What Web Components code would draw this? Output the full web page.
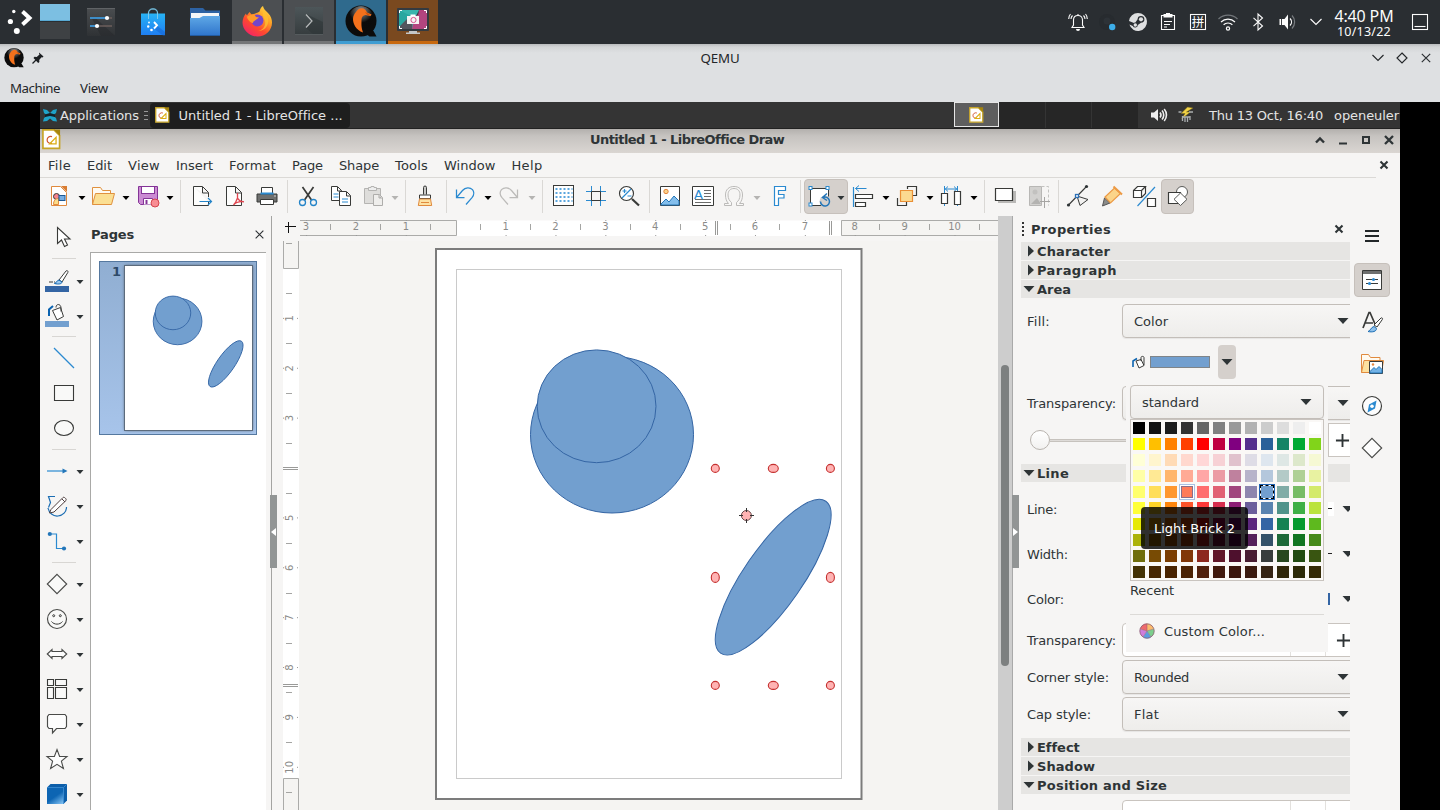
<!DOCTYPE html>
<html lang="en">
<head>
<meta charset="utf-8">
<title>QEMU</title>
<style>
html,body{margin:0;padding:0;width:1440px;height:810px;overflow:hidden;background:#000}
</style>
</head>
<body>
<host-desktop></host-desktop>
<script>
const ICONS = {
/* host panel */
launcher:[32,32,`<g fill="#fff"><circle cx="9.8" cy="5.5" r="1.7"/><circle cx="6.4" cy="15.5" r="2.6"/><circle cx="12.8" cy="25" r="3"/></g><path d="M18.500 5l7 6.500-7 6.500" transform="translate(0,.5)" fill="none" stroke="#fff" stroke-width="4" stroke-linejoin="miter"/>`],
settings:[30,30,`<defs><linearGradient id="a" x1="0" y1="0" x2="0" y2="1"><stop offset="0" stop-color="#4a4d50"/><stop offset="1" stop-color="#2f3235"/></linearGradient></defs><rect x="1" y="1" width="28" height="28" rx="1" fill="url(#a)"/><path d="M1 1.5h28" stroke="#606366"/><path d="M6 11.5l3-1 20 18.5H15z" fill="#25282b" opacity=".5"/><path d="M4 11h18" stroke="#3f97d8" stroke-width="1.8"/><path d="M22 11h4M11 19h15" stroke="#6c5f5c" stroke-width="1.5"/><path d="M4 19h7" stroke="#3f97d8" stroke-width="1.8"/><circle cx="21" cy="11" r="2.1" fill="#fff"/><circle cx="11" cy="19" r="2.1" fill="#fff"/>`],
store:[28,30,`<defs><linearGradient id="a" x1="0" y1="0" x2="0" y2="1"><stop offset="0" stop-color="#27b3f5"/><stop offset="1" stop-color="#1f7ef2"/></linearGradient></defs><path d="M9.500 7V5.500a4.500 3.800 0 0 1 9 0V12M9.500 7v5" fill="none" stroke="#4d8296" stroke-width="1.3"/><path d="M2 6h24v21.500H2z" fill="url(#a)" transform="translate(0,.5)"/><path d="M9.500 12V6a4.500 4 0 0 1 9 0v6" fill="none" stroke="#7fc9ea" stroke-width="1"/><path d="M14 15.500l5 3-3 4 8 6h2V25z" fill="#1667d6" opacity=".6"/><g fill="#fff"><circle cx="10" cy="15.500" r=".9"/><circle cx="9.200" cy="19.500" r="1.200"/><circle cx="12.500" cy="23" r="1.300"/></g><path d="M15 15l3 3.300-3 3.200" fill="none" stroke="#fff" stroke-width="1.900"/>`],
folder:[32,30,`<defs><linearGradient id="a" x1="0" y1="0" x2="0" y2="1"><stop offset="0" stop-color="#5fa8e6"/><stop offset="1" stop-color="#2e74cb"/></linearGradient></defs><path d="M1 1h13l2.500 2.500H31v10H1z" fill="#2d62a3"/><path d="M2 6h28v6H2z" fill="#f4f6f8"/><path d="M1 11h9.500l3.500-2H31v20H1z" fill="url(#a)"/><path d="M1 28h30v1H1z" fill="#235b9f"/>`],
firefox:[32,32,`<defs><linearGradient id="a" x1=".9" y1="0" x2=".2" y2="1"><stop offset="0" stop-color="#ffe14a"/><stop offset=".35" stop-color="#ffa326"/><stop offset=".65" stop-color="#ff4a2e"/><stop offset="1" stop-color="#f0216b"/></linearGradient></defs><path d="M18.500 6.500C19.500 3 20.500 1.800 22 1c.5 3 2.500 4.500 5 7 3 3 4 6.500 4 9.500C31 25.500 24.500 31.500 16.500 31.500S1.500 25 1.500 17.500c0-3.500 1.500-7 3.500-9 .2 1 .6 1.500 1 1.700L8.500 7l2 2.500c2-.7 4.500-.6 8-3z" fill="url(#a)"/><circle cx="16.500" cy="15.500" r="6" fill="#7446c9"/><path d="M10.500 9.500c3-.5 4 1 4.500 2.500l3 .5-4 3c-1 .5-2 1-2 2.500-3-.5-6-4-6-6.500z" fill="#ff9a2a"/><path d="M22 5c4 5 6 7 5 13-1 5-5 8-10 8 5-1 8-5 7-10-.5-3-3-5-2-11z" fill="#ffc230" opacity=".75"/>`],
konsole:[30,30,`<defs><linearGradient id="a" x1="0" y1="0" x2="0" y2="1"><stop offset="0" stop-color="#4d5659"/><stop offset="1" stop-color="#363c3e"/></linearGradient></defs><rect x="1" y="1" width="28" height="28" fill="url(#a)"/><path d="M12 8l6 7-6 7 8 7h9V16z" fill="#2e3436" opacity=".55"/><path d="M12 8.500l6 6.500-6 6.500" fill="none" stroke="#b7babb" stroke-width="1.200"/><path d="M1 28.500h28" stroke="#555b5d"/>`],
qemu:[32,34,`<defs><radialGradient id="a" cx=".5" cy=".2" r=".5"><stop offset="0" stop-color="#c8c8c8"/><stop offset="1" stop-color="#0b0b0b"/></radialGradient></defs><circle cx="16" cy="17" r="15.500" fill="#0c0c0c"/><circle cx="16" cy="14" r="12" fill="url(#a)" opacity=".75"/><path d="M22 26l6.500 1 3 5.500h-7l-4-3z" fill="#0c0c0c"/><path d="M11 8c2-3.500 6-5 9-2.500 1 .9 1.500 2 2 3l4.500 2-1 1.500-5-1c-2.500.5-4 2-4 5 0 4.500-.5 6 1.500 12.500C11 26 8 20 8 15c0-3 1.500-5.500 3-7z" fill="#f4711c"/><path d="M20 8l5 2.300-2.500 1.200z" fill="#cf5208"/>`],
spectacle:[34,28,`<rect x="1" y="1" width="32" height="23" rx="1" fill="#343a40"/><path d="M3 3h13l7 19H3z" fill="#2aa7a0"/><path d="M3 20l13-13v15H3z" fill="#54555e"/><path d="M23 3h8v19H20z" fill="#b4427c"/><path d="M3 3h20l-4 8z" fill="#38b5ad"/><path d="M18 10L31 3v19H16z" fill="#b3457f"/><rect x="11" y="9" width="12" height="8" fill="#f5f3f3"/><rect x="14.500" y="7.500" width="5" height="2" fill="#fff"/><circle cx="17.500" cy="13" r="2.600" fill="none" stroke="#d5528f"/><path d="M3.500 6V3.500H6M28 3.500h2.500V6M3.500 19v2.500H6M28 21.500h2.500V19" fill="none" stroke="#fff"/><path d="M13 24h8v1.500h3V27H10v-1.500h3z" fill="#c4c6c8"/>`],
bell:[22,22,`<g fill="none" stroke="#fcfcfc" stroke-width="1.100"><path d="M5 16.500h12l-1.500-2.500V9c0-3-2-4.500-4.500-4.500S6.500 6 6.500 9v5z"/><path d="M5.500 4.500c-1 1-1.500 2-1.500 3.500M3.500 3C2.300 4.300 1.700 6 1.700 8M16.500 4.500c1 1 1.500 2 1.500 3.500M18.500 3c1.200 1.300 1.800 3 1.800 5M11 3v1.500"/></g><path d="M9 18h4a2 2 0 0 1-4 0z" fill="#fcfcfc"/>`],
dimapp:[22,22,`<circle cx="10" cy="11" r="8" fill="#272b2f"/><circle cx="10" cy="10" r="3.500" fill="#2d3237"/><circle cx="15.200" cy="16" r="3.200" fill="#3daee9"/>`],
steam:[22,22,`<path d="M11 2a9 9 0 1 1-8.600 11.600l3.400 1.400a2.600 2.600 0 0 0 5-1l3.200-2.300a3.400 3.400 0 1 0-3.400-3.400L8.400 11.600c-.6 0-1 .1-1.400.4L2 10A9 9 0 0 1 11 2z" fill="#dfe0e1"/><circle cx="14" cy="8.300" r="2.100" fill="#dfe0e1"/><circle cx="8.300" cy="14" r="1.700" fill="#dfe0e1"/>`],
clip:[22,22,`<path d="M4.500 4.500h13v14h-13z" fill="none" stroke="#fcfcfc" stroke-width="1.100"/><path d="M6.500 3h9v3.500h-9zM9 2h4v2H9z" fill="#fcfcfc"/><path d="M7 10.500h8M7 13.500h6M7 16h3" stroke="#fcfcfc" stroke-width="1.100"/>`],
pinyin:[22,22,`<rect x="3.500" y="3.500" width="15" height="15" fill="none" stroke="#fcfcfc" stroke-width="1.100"/><text x="11" y="15.500" text-anchor="middle" font-size="12.500" font-family="Noto Sans CJK SC,sans-serif" fill="#fcfcfc">拼</text>`],
wifi:[22,22,`<g fill="none" stroke-width="1.200"><path d="M1.500 8a13.500 13.500 0 0 1 19 0" stroke="#72767a"/><path d="M4 11a10 10 0 0 1 14 0M6.600 13.800a6.300 6.300 0 0 1 8.800 0" stroke="#fcfcfc"/><circle cx="11" cy="17.500" r="1.600" stroke="#fcfcfc"/></g>`],
bt:[22,22,`<path d="M6.500 6.800l9 8.200L11 19V3l4.500 4-9 8.200" fill="none" stroke="#fcfcfc" stroke-width="1.100"/>`],
vol:[22,22,`<path d="M2.500 8h1.600v6H2.500zM5 8h2.500L11 3.500v15L7.500 14H5z" fill="#fcfcfc"/><path d="M13 7.500c2 2 2 5 0 7" fill="none" stroke="#fcfcfc" stroke-width="1.200"/><path d="M15 4.500c3.500 3.500 3.500 9.500 0 13" fill="none" stroke="#777b7f" stroke-width="1.200"/>`],
chev:[16,16,`<path d="M2.500 5l5.500 5.500L13.500 5" fill="none" stroke="currentColor" stroke-width="1.150"/>`],
desk:[22,22,`<rect x="3.500" y="3.500" width="15" height="15" fill="none" stroke="#fcfcfc" stroke-width="1.100"/><path d="M5.500 15.500h11" stroke="#fcfcfc" stroke-width="1.100"/>`],
pin:[14,14,`<path d="M8 1.500l4.500 4-1 1-1-.2-2.300 2.600.2 2-1.200 1L2.500 7l1-1.200 2.200.2L8.500 3.500 8 2.500z" fill="#1c1f22"/><path d="M5 9l-3.500 3.500" stroke="#1c1f22" stroke-width="1.200"/>`],
dia:[16,16,`<path d="M8 3l5 5-5 5-5-5z" fill="none" stroke="#232629" stroke-width="1.150"/>`],
x:[12,12,`<path d="M1.800 1.800l8.400 8.400M10.200 1.800l-8.400 8.400" fill="none" stroke="#2c3033" stroke-width="1.200"/>`],
/* guest panel */
xfce:[16,16,`<path d="M1 2l4 1 3 3 3-3 4-1-1 4-3 2.500 3 2.500 1 3.500-4-.5-3-2.500L5 14l-4 .5L2 11l3-2.500L2 6z" fill="#1fa3c9"/><path d="M3 7.500l5-1.500 5 1.500v2.500l-5-1-5 1z" fill="#12222a"/>`],
drawdoc:[20,22,`<path d="M1 1h12l6 6v14H1z" fill="#fff" stroke="#c6a427" stroke-width="1.800"/><path d="M12.500 .5H19.500v7z" fill="#a5850f"/><path d="M10.800 8.300a3.800 3.800 0 1 0 0 7" fill="none" stroke="#d0532b" stroke-width="1.300"/><path d="M15.200 9v7H8.300z" fill="none" stroke="#dcae14" stroke-width="1.400"/>`],
gvol:[18,16,`<path d="M1 5.500h3L8 2v12l-4-3.500H1z" fill="#eee"/><path d="M10 5.500c1.200 1.500 1.200 3.500 0 5M12 3.500c2.300 2.500 2.300 6.500 0 9M14.200 2c3 3.500 3 8.500 0 12" fill="none" stroke="#eee" stroke-width="1.600"/>`],
power:[18,18,`<path d="M10.500 1L4 7.500h4L4.500 13l9-7h-4L16 2z" fill="#f3d447" stroke="#776717" stroke-width=".5"/><path d="M1.500 6h3M12 6h4M5.500 10v5M8 11.500V16M10.500 11.500V16M13 10v4M5 11h8" stroke="#a9adaf" stroke-width="1.300" fill="none"/>`],
/* window buttons */
shade:[12,12,`<path d="M2 8.500L6 4.500l4 4" fill="none" stroke="#2e3436" stroke-width="2.400"/>`],
min:[12,12,`<path d="M2 9.500h8" stroke="#2e3436" stroke-width="2"/>`],
max:[12,12,`<rect x="3" y="3" width="6" height="6" fill="none" stroke="#2e3436" stroke-width="2"/>`],
bx:[12,12,`<path d="M2 2l8 8M10 2l-8 8" stroke="#2e3436" stroke-width="2.300"/>`],
bxs:[12,12,`<path d="M2.500 2.500l7 7M9.500 2.500l-7 7" stroke="#2e3436" stroke-width="2.100"/>`],
dd:[8,6,`<path d="M.5 1h7L4 5z" fill="currentColor"/>`],
bigdd:[12,8,`<path d="M.5 1h11L6 7z" fill="#2e3436"/>`],
tright:[8,12,`<path d="M1 .5v11L7 6z" fill="#2e3436"/>`],
/* toolbar */
new:[24,24,`<path d="M4.500 2.500h9l6 6v13h-15z" fill="#fff" stroke="#e08a3e"/><path d="M14 2h6v6z" fill="#d97c31"/><circle cx="9.500" cy="12.500" r="3" fill="#f4848c" stroke="#3a3a38"/><path d="M6.500 20.500c0-4 2-6 5-6v6z" fill="#fbdc8a" stroke="#e08a3e"/><rect x="12" y="11.500" width="6" height="5" fill="#76aee4" stroke="#1e5a94"/>`],
open:[24,24,`<path d="M1.500 20.500v-17h8l2 3h8v3" fill="#fffaf0" stroke="#e0913f"/><path d="M4.500 9.500h19l-3 11h-19z" fill="#fbdf93" stroke="#e0913f"/>`],
save:[24,24,`<path d="M2.500 2.500h19v18h-17l-2-2z" fill="#cb8bd3" stroke="#843497"/><rect x="5.500" y="2.500" width="13" height="7" fill="#fff" stroke="#843497"/><path d="M7.500 20.500v-6h9v6" fill="#fff" stroke="#843497"/><path d="M10.500 16v4" stroke="#843497" stroke-width="2"/><circle cx="19" cy="19" r="4" fill="#f88d93" stroke="#d4454e"/>`],
export:[24,24,`<path d="M3.500 2.500h9l6 6V13M18.500 18v3.500h-15v-19M12.500 3v6h6" fill="#fdfdfc" stroke="#393a38"/><path d="M9.500 17.500h12M18 14l3.500 3.500L18 21" fill="none" stroke="#2484c8" stroke-width="1.200"/>`],
pdf:[24,24,`<path d="M3.500 2.500h9l6 6v13h-15zM12.500 3v6h6" fill="#fdfdfc" stroke="#393a38"/><path d="M14.500 9v5c-1 3-2 5-4 7M14.500 14c1 2 3 3.500 6.500 3.800M10.500 21c2-2.500 5-3.800 10.500-3.200" fill="none" stroke="#e0454f" stroke-width="1.300"/>`],
print:[24,24,`<path d="M6.500 9V3.500h11V9" fill="#fff" stroke="#393a38"/><path d="M2 10h20v8H2z" fill="#6e6f6e" stroke="#393a38"/><path d="M5.500 9.500h13" stroke="#2b8ad0" stroke-width="2"/><path d="M5.500 15.500h13v5h-13z" fill="#fff" stroke="#393a38"/><circle cx="20" cy="12" r=".8" fill="#ddd"/>`],
cut:[24,24,`<path d="M6.500 3l9 13M17.500 3l-9 13" fill="none" stroke="#393a38" stroke-width="1.700"/><circle cx="6.500" cy="18.500" r="3" fill="none" stroke="#2484c8" stroke-width="1.300"/><circle cx="17.500" cy="18.500" r="3" fill="none" stroke="#2484c8" stroke-width="1.300"/>`],
copy:[24,24,`<path d="M2.500 2.500h6l4 4v10h-10zM8.500 3v4h4" fill="#fff" stroke="#393a38"/><path d="M4.500 10h5M4.500 13h5" stroke="#2b8ad0"/><path d="M10.500 7.500h7l4 4v10h-11zM17.500 8v4h4" fill="#fff" stroke="#393a38"/><path d="M13 15h6M13 18h6" stroke="#2b8ad0"/>`],
paste:[24,24,`<path d="M3.500 4.500h16v15h-16z" fill="#dedddb" stroke="#b5b4b2"/><path d="M7.500 6.500v-3h2.500v-1h3v1h2.500v3z" fill="#eee" stroke="#b5b4b2"/><path d="M12.500 10.500h6l3 3v8h-9zM18 11v3h3" fill="#efeeec" stroke="#aeadab"/>`],
brush:[24,24,`<path d="M10.500 10.500V3.500a1.500 1.500 0 0 1 3 0v7" fill="#c9c9c8" stroke="#393a38"/><path d="M6.500 14.500v-3.500h11v3.500z" fill="#fff" stroke="#393a38"/><path d="M6.500 15l-1.200 6.500h13.400L17.500 15z" fill="#fde2a4" stroke="#e08a3e"/><path d="M8 18.500h8" stroke="#e08a3e"/>`],
undo:[24,24,`<path d="M3.500 5.500v8h8M4 13l5.500-6.500c3-3.500 7.500-3.500 10-.8 2 2.500 1.500 5.500-.5 8L13 20.500" fill="none" stroke="#2b8ad0" stroke-width="1.250"/>`],
redo:[24,24,`<path d="M20.500 5.500v8h-8M20 13l-5.500-6.500c-3-3.500-7.500-3.500-10-.8-2 2.500-1.500 5.500.5 8L11 20.500" fill="none" stroke="#bcbbb9" stroke-width="1.250"/>`],
grid:[25,24,`<rect x="2.500" y="1.500" width="20" height="20" fill="#fff" stroke="#393a38"/><path d="M4.500 5h17M4.500 9h17M4.500 13h17M4.500 17h17" stroke="#5ba6de" stroke-width="2" stroke-dasharray="2 2"/>`],
guides:[24,24,`<path d="M7.500 2v20M16.500 2v20M2 7.500h20M2 16.500h20" stroke="#2b8ad0"/><path d="M7.500 7.500h9v9h-9z" fill="none" stroke="#393a38"/>`],
zoom:[24,24,`<circle cx="9.500" cy="9.500" r="7" fill="#fff" stroke="#393a38" stroke-width="1.150"/><path d="M15 15l7 6.500" stroke="#393a38" stroke-width="2.200"/><path d="M14 5l-9 9M5.500 7h4M7.500 5v4M10.500 12h4" stroke="#2b8ad0" stroke-width="1.150"/>`],
image:[24,24,`<path d="M2.500 2.500h19v19h-19z" fill="#fff" stroke="#393a38"/><circle cx="8" cy="7.500" r="2.200" fill="#fbd28b" stroke="#e5843a"/><path d="M3 21v-1l5-5 3 3 5-6 5 5v4z" fill="#83beec" stroke="#2376b9"/>`],
textbox:[24,24,`<path d="M1.500 2.500h21v19h-21z" fill="#fff" stroke="#393a38"/><text x="3" y="14.500" font-family="DejaVu Sans" font-size="13" fill="#2b8ad0">A</text><path d="M13 6.500h7M13 9.500h7M13 12.500h7M4 15.500h16M4 18.500h16" stroke="#6b6c6a"/>`],
omega:[24,24,`<path d="M2.500 21.500v-2h4C4.500 17.500 3.500 14.500 3.500 11 3.500 5.500 7 2.500 12 2.500s8.500 3 8.500 8.500c0 3.500-1 6.500-3 8.500h4v2h-7v-3c2-1.500 3.500-4 3.500-7.500 0-4-2-6.500-6-6.500s-6 2.500-6 6.500c0 3.500 1.500 6 3.500 7.500v3z" fill="#f8f7f6" stroke="#bcbbb9"/>`],
fontwork:[24,24,`<path d="M6.500 2.500h11v4h-7v4h5.500v3.500h-5.500v7.500h-4z" fill="#fff" stroke="#2b8ad0" stroke-width="1.200"/>`],
rotate:[24,24,`<path d="M3.500 4.500h18v17h-18z" fill="#fff" stroke="#393a38"/><circle cx="18.500" cy="17.500" r="6" fill="#d5d0cc"/><g fill="#fff" stroke="#2b8ad0"><rect x="2" y="2.500" width="3" height="3"/><rect x="19" y="2.500" width="3" height="3"/><rect x="2" y="19" width="3" height="3"/></g><path d="M13.500 17.500a4.500 4.500 0 1 0 2.500-4M20 9.500l-4.500 4 4.500 3" fill="none" stroke="#2376b9" stroke-width="1.500"/>`],
align:[24,24,`<path d="M2.500 3v20" stroke="#2b8ad0" stroke-width="1.200"/><path d="M4.500 4.500h11M8 1.500l-3.500 3L8 7.500" fill="none" stroke="#2b8ad0"/><path d="M4.500 10.500h17v4h-17zM4.500 18.500h10v4h-10z" fill="#fff" stroke="#393a38" stroke-width="1.200"/>`],
arrange:[24,24,`<path d="M12.500 5V2.500h9v9h-4M2.500 14v7.500h9V18" fill="none" stroke="#393a38" stroke-width="1.200"/><path d="M5.500 6.500h12v11h-12z" fill="#fbd990" stroke="#ea8f35" stroke-width="1.200"/>`],
distribute:[24,24,`<path d="M5.500 2v20M18.500 2v20" stroke="#2b8ad0" stroke-width="1"/><path d="M6 5h12M9 2.500L6.300 5 9 7.500M15 2.500L17.700 5 15 7.500" fill="none" stroke="#2b8ad0"/><path d="M2.500 9.500h6v10h-6zM15.500 7.500h6v13h-6z" fill="#fff" stroke="#393a38" stroke-width="1.200"/>`],
shadow:[24,24,`<path d="M5 7h18v12H5z" fill="#b9b8b6"/><path d="M2.500 4.500h17v12h-17z" fill="#fff" stroke="#393a38" stroke-width="1.200"/>`],
crop:[24,24,`<path d="M2.500 2.500h12v19h-12z" fill="#d2d1cf" stroke="#b8b7b5"/><path d="M14.500 2.500h7v19" fill="none" stroke="#c3c2c0" stroke-dasharray="3 2"/><circle cx="8" cy="8" r="2.500" fill="#c2c1bf"/><path d="M4 20l6-6 4 6z" fill="#b4b3b1"/><path d="M13 17.500h10M17.500 13v11" stroke="#a6a5a3"/>`],
points:[24,24,`<path d="M2.500 21L20 3" stroke="#393a38" stroke-width="1.100"/><path d="M11 12l3 9.500 8-6z" fill="#f2f1f0" stroke="#393a38"/><circle cx="2.500" cy="21" r="1.600" fill="#2e3436"/><circle cx="20.500" cy="2.500" r="1.600" fill="#2e3436"/><rect x="9.500" y="10.500" width="3" height="3" fill="#fff" stroke="#2b6fb5" stroke-width="1.300"/>`],
pen:[24,24,`<path d="M2.500 22l2-8 5.500 5z" fill="#8a8b89" stroke="#555"/><path d="M5 13L14.500 4l6 5.500-10 9.500z" fill="#fbd489" stroke="#ec9a45" stroke-width="1.200"/><path d="M13.500 2.500l8.500 8" stroke="#ec9a45" stroke-width="2"/>`],
cube3d:[24,24,`<path d="M.5 6.500h8v7h-8zM.5 6.500l4-4h8l-4 4M12.500 2.500v7l-4 4" fill="#fff" stroke="#393a38" stroke-width="1.150"/><path d="M4.500 22L22 3" stroke="#2b8ad0" stroke-width="1.150"/><path d="M14.500 14.500h8v8h-8z" fill="#fff" stroke="#393a38" stroke-width="1.200"/>`],
shapes:[24,24,`<circle cx="16" cy="8" r="5.500" fill="#fff" stroke="#5a5b59"/><path d="M2.500 8.500h12v11h-12z" fill="#fff" stroke="#393a38" stroke-width="1.150"/><path d="M14.500 9l6.500 6.300-6.500 6.200-6.500-6.200z" fill="#fff" stroke="#5a5b59"/>`],
/* drawing tools */
pointer:[24,24,`<path d="M5.500 2.500v16l4-3.500 3 6.500 3-1.500-3-6h5.500z" fill="#fff" stroke="#393a38" stroke-width="1.100"/>`],
linecolor:[24,24,`<path d="M4 13h4M9 13h1" stroke="#393a38" stroke-width="1.200"/><path d="M14 11l7-9c1-1 2.500 0 1.800 1.500L17 13z" fill="#fff" stroke="#393a38"/><path d="M9.500 14.500c2-.5 2-3 4.500-3.500l3 2c0 2-3.500 2.500-7.500 1.500z" fill="#9cc8ee" stroke="#0b63b0"/><rect x="0" y="17" width="24" height="6" fill="#3465a4"/>`],
fillcolor:[24,24,`<path d="M4 12V5.500L8 2" fill="none" stroke="#0b63b0" stroke-width="2"/><path d="M7.500 6.500l8-3 3 9-6.500 3.500z" fill="#fff" stroke="#393a38"/><path d="M11 3.500c0-4 4.500-4 5 0v4" fill="none" stroke="#393a38"/><rect x="0" y="17" width="24" height="6" fill="#729fcf"/>`],
minifill:[16,14,`<path d="M2 12V6l4-2.500" fill="none" stroke="#0b63b0" stroke-width="1.600"/><path d="M5 6l5-1.500 3 6-5 2.500z" fill="#fff" stroke="#393a38"/><path d="M10 6V2.500c0-1.500 3-1.500 3 0V10" fill="none" stroke="#393a38"/>`],
line:[24,24,`<path d="M2 2l20 20" stroke="#2b8ad0" stroke-width="1.150"/>`],
rect:[24,24,`<path d="M2.500 4.500h19v15h-19z" fill="#f9f9f8" stroke="#393a38" stroke-width="1.100"/>`],
ellipse:[24,24,`<ellipse cx="12" cy="12" rx="9.500" ry="7.500" fill="#f9f9f8" stroke="#393a38" stroke-width="1.100"/>`],
arrow:[24,24,`<path d="M2 12h16" stroke="#2b8ad0" stroke-width="1.200"/><path d="M17.500 9.500L22.500 12l-5 2.500z" fill="#2376b9"/>`],
curve:[24,24,`<path d="M10 2.500H3.500l2 6-2 5M3 14c1 5 5 8.500 10 8s8.500-4 8.500-9" fill="none" stroke="#1b6db3" stroke-width="1.200"/><path d="M6 15.500L18 3.500c1-1 4 1.500 3 3L9 18l-4.500 1z" fill="#fff" stroke="#4d3d3d"/><path d="M17 5l3 3" stroke="#4d3d3d"/>`],
connector:[24,24,`<path d="M4.500 5h7v14.500h7" fill="none" stroke="#2b8ad0" stroke-width="1.200"/><circle cx="4.800" cy="5" r="2.100" fill="#2376b9"/><circle cx="19" cy="19.500" r="2.100" fill="#2376b9"/>`],
diamond:[24,24,`<path d="M12 2.300l9.700 9.700-9.700 9.700L2.300 12z" fill="#f9f9f8" stroke="#4a4b49" stroke-width="1.150"/>`],
smile:[24,24,`<circle cx="12" cy="12" r="9.500" fill="#f9f9f8" stroke="#4a4b49" stroke-width="1.150"/><circle cx="8.700" cy="8.700" r="1" fill="none" stroke="#393a38"/><circle cx="15.300" cy="8.700" r="1" fill="none" stroke="#393a38"/><path d="M6.500 14.500c2.500 3.500 8.500 3.500 11 0" fill="none" stroke="#393a38"/>`],
dbl:[24,24,`<path d="M2.300 12L7 7.500v2h10v-2l4.700 4.500-4.700 4.500v-2H7v2z" fill="#fdfdfd" stroke="#4a4b49" stroke-width="1.150"/>`],
flow:[24,24,`<path d="M2.500 2.500h6v6h-6zM10.500 2.500h11v6h-11zM2.500 10.500h6v11h-6zM10.500 10.500h11v11h-11z" fill="#f9f9f8" stroke="#393a38" stroke-width="1.100"/>`],
callout:[24,24,`<path d="M4 2.500h16l1.500 2v10l-1.500 2h-8.500L7.500 21v-4.500H4l-1.500-2v-10z" fill="#fdfdfd" stroke="#4a4b49" stroke-width="1.150"/>`],
star:[24,24,`<path d="M12 2.500l2.600 7H22l-5.600 4.700 2 7.300L12 17.300l-6.400 4.200 2-7.300L2 9.500h7.400z" fill="#fdfdfd" stroke="#4a4b49" stroke-width="1.100"/>`],
cube:[24,24,`<defs><linearGradient id="a" x1=".2" y1="0" x2=".9" y2="1"><stop offset=".5" stop-color="#0d65b3"/><stop offset="1" stop-color="#7fc0f2"/></linearGradient></defs><path d="M5.500 2H22v16.500L18.500 22H2V5.500z" fill="#0c5ea9"/><path d="M2 5.500h16.500V22H2z" fill="url(#a)"/><path d="M2 5.500h16.500V22M18.500 5.500L22 2" fill="none" stroke="#3f8fd4" stroke-width=".8"/>`],
/* sidebar tabs */
burger:[24,24,`<path d="M5 7h14M5 12h14M5 17h14" stroke="#232729" stroke-width="2"/>`],
props:[24,24,`<path d="M2.500 2.500h19v19h-19z" fill="#fff" stroke="#393a38"/><path d="M3 3h18v3H3z" fill="#6e6f6e"/><path d="M6 11.500h12M6 15.500h12" stroke="#393a38"/><circle cx="13.500" cy="11.500" r="1.600" fill="#2b8ad0"/><circle cx="9.500" cy="15.500" r="1.600" fill="#2b8ad0"/>`],
styles:[24,24,`<path d="M3 18L9 2.500h1L15 14M5 13h8" fill="none" stroke="#393a38" stroke-width="1.700"/><path d="M14 15l7-7c1-.6 2 .5 1.400 1.400L17 17z" fill="#fff" stroke="#393a38"/><path d="M8 21.500c2 0 3-4.500 6-5l2.500 2c0 3-4 4-8.500 3z" fill="#8fc1ec" stroke="#1b6db3"/>`],
gallery:[24,24,`<path d="M1.500 20.500v-18h7l2 3h9.500v3" fill="#fffaf0" stroke="#e08a3e"/><path d="M4 8.500h19.500l-2 12H1.500z" fill="#fde1a0" stroke="#e08a3e"/><path d="M9.500 9.500h13v12h-13z" fill="#fff" stroke="#393a38"/><circle cx="13" cy="12.500" r="1.200" fill="#e5843a"/><path d="M10 21v-1.500l4-4 2 2 3-3 3 3v3.500z" fill="#72b2e6" stroke="#2376b9"/>`],
nav:[24,24,`<circle cx="12" cy="12" r="9.500" fill="#fdfdfd" stroke="#393a38" stroke-width="1.150"/><path d="M16.500 6.500l-1.500 8-7.500 4 1.500-8z" fill="#2b8ad0"/><circle cx="12" cy="12.300" r="1.800" fill="#fff"/>`],
shapetab:[24,24,`<path d="M12 2.300l9.700 9.700-9.700 9.700L2.300 12z" fill="#fdfdfd" stroke="#4a4b49" stroke-width="1.150"/>`],
wheel:[16,16,`<path d="M8 8V.5A7.500 7.500 0 0 1 15 6z" fill="#fbbc6d"/><path d="M8 8l7-2a7.500 7.500 0 0 1-3 8z" fill="#7ccf8c"/><path d="M8 8l4 6.300a7.500 7.500 0 0 1-8 0z" fill="#5b9de0"/><path d="M8 8l-4 6A7.500 7.500 0 0 1 1 6z" fill="#cf7ddb"/><path d="M8 8L1 6A7.500 7.500 0 0 1 8 .5z" fill="#ee6a6d"/><circle cx="8" cy="8" r="7.200" fill="none" stroke="#8b5f74" stroke-width=".8"/><path d="M8 8V1M8 8l6.500-2M8 8l4 6M8 8l-4 6M8 8L1.500 6" stroke="#8b5f74" stroke-width=".5"/>`],
plus:[16,16,`<path d="M1 8h14M8 1v14" stroke="#2e3436" stroke-width="2"/>`]
};
const icon = (n, w, st='') => `<ui-icon name="${n}"${w?` size="${w}"`:''} style="${st}"></ui-icon>`;
const txt = (t, w, st='') => `<fit-text w="${w}" style="${st}">${t}</fit-text>`;

class Base extends HTMLElement{
  constructor(){ super(); this.attachShadow({mode:'open'}); }
  connectedCallback(){ this.shadowRoot.innerHTML = `<style>*{box-sizing:border-box}${this.css()}</style>${this.html()}`; this.ready?.(); }
  css(){return ':host{display:block}'} html(){return '<slot></slot>'}
}

class HostDesktop extends Base{
  css(){return `:host{display:flex;flex-direction:column;width:1440px;height:810px;background:#000;font-family:"Noto Sans",sans-serif}
  guest-screen{flex:1;margin:0 40px}`}
  html(){return `<host-panel></host-panel><qemu-header></qemu-header><guest-screen></guest-screen>`}
}
class HostPanel extends Base{
  css(){return `:host{display:flex;height:44px;background:#2a2e32;color:#fcfcfc;align-items:stretch}
  .c{display:flex;align-items:center;justify-content:center}
  .pager{width:30px;margin-right:7px;display:flex;flex-direction:column;gap:1px;padding-top:4px}
  .pager i{height:17px;background:#7cbfe2}.pager i+i{background:#3e4144}
  .pager i:first-child{border-bottom:1px solid #58a9d3}
  .t{width:50px;margin-right:2px;border-bottom:3px solid #747678;background:#4c4f52;padding-top:1px}
  .q{background:#2f6a8d;border-color:#3f9dd2}.s{background:#7a491f;border-color:#c8690f}
  .sp{flex:1}.tray{gap:8px}.clock{width:66px;flex-direction:column;margin-left:7px;padding-top:1px}`}
  html(){return `<div class="c" style="width:40px">${icon('launcher')}</div><div class="pager"><i></i><i></i></div>
  <div class="c" style="width:48px;padding-right:1px">${icon('settings')}</div><div class="c" style="width:56px">${icon('store')}</div><div class="c" style="width:48px;margin-right:3px">${icon('folder')}</div>
  <div class="c t">${icon('firefox')}</div><div class="c t">${icon('konsole')}</div><div class="c t q">${icon('qemu')}</div><div class="c t s">${icon('spectacle')}</div>
  <div class="sp"></div><div class="c tray">${['bell','dimapp','steam','clip','pinyin','wifi','bt','vol'].map(n=>icon(n)).join('')}</div>
  <div class="c" style="margin-left:9px">${icon('chev')}</div>
  <div class="c clock">${txt('4:40 PM',59,'font-size:16px;line-height:17px')}${txt('10/13/22',54,'font-size:12.500px;line-height:13px')}</div>
  <div class="c" style="margin:0 9px 0 12px">${icon('desk')}</div>`}
}
class QemuHeader extends Base{
  css(){return `:host{display:block;height:58px;background:linear-gradient(#b9bbbd,#d3d5d7 3px,#dee0e2 9px);color:#232629;font-size:13.300px}
  .a{height:28px;display:grid;grid-template-columns:1fr auto 1fr;align-items:center}
  .l,.r{display:flex;align-items:center}.r{justify-content:flex-end;gap:8px;padding-right:8px}
  .m{display:flex;gap:20px;padding:7px 10px;line-height:18px}`}
  html(){return `<div class="a"><div class="l">${icon('qemu',20,'margin:0 7px 0 4px')}${icon('pin')}</div>${txt('QEMU',39)}<div class="r">${icon('chev')}${icon('dia')}${icon('x',12,'margin-left:2px')}</div></div>
  <div class="m">${txt('Machine',50)}${txt('View',28)}</div>`}
}
class GuestScreen extends Base{
  css(){return `:host{display:flex;flex-direction:column;min-height:0;overflow:hidden;background:#f6f5f4;font:13px "DejaVu Sans",sans-serif;color:#2e3436}
  .body{flex:1;display:flex;min-height:0}`}
  html(){return `<guest-panel></guest-panel><draw-title></draw-title><draw-menu></draw-menu><draw-toolbar></draw-toolbar>
  <div class="body"><tool-box></tool-box><pages-pane></pages-pane><draw-canvas></draw-canvas><side-bar></side-bar></div>`}
}
class GuestPanel extends Base{
  css(){return `:host{display:flex;height:27px;background:#343434;color:#e4e4e4;align-items:center;border-bottom:1px solid #222}
  .task{display:flex;align-items:center;width:200px;height:25px;background:#1e1e1e;border-radius:4px;padding-left:5px;margin-left:2px}
  .ham{display:flex;flex-direction:column;gap:3px;margin-left:5px;width:4px}.ham i{height:1px;background:#999}
  .ws{display:flex;height:26px;width:184px;background:#262626;margin-left:604px}
  .ws i{width:46px;border-right:1px solid #343434}.ws i:first-child{width:45px;border:1px solid #e6e6e6;background:#5e5e5e;display:flex;align-items:center;justify-content:center;height:25px}.ws i:nth-child(2){width:47px}.ws i:last-child{border:0}`}
  html(){return `${icon('xfce',0,'margin:0 2px')}${txt('Applications',79)}<span class="ham"><i></i><i></i><i></i></span>
  <span class="task">${icon('drawdoc',14.5,'margin-right:9px')}${txt('Untitled 1 - LibreOffice ...',164)}</span>
  <span class="ws"><i>${icon('drawdoc',14.5)}</i><i></i><i></i><i></i></span>
  ${icon('gvol',0,'margin-left:12px')}${icon('power',0,'margin-left:9px')}${txt('Thu 13 Oct, 16:40',114,'margin-left:14px')}${txt('openeuler',65,'margin-left:11px')}`}
}
class DrawTitle extends Base{
  css(){return `:host{display:grid;grid-template-columns:1fr auto 1fr;height:24px;background:linear-gradient(#b3b0ad,#c6c3c0 7px,#dad6d2);align-items:center;font-weight:bold}
  .r{display:flex;justify-content:flex-end;align-items:center;padding:0 5px 3px 0}
  .l{padding:0 0 2px 2px;margin-right:-66px;height:24px}.t{margin-left:-67px;padding-bottom:3px}`}
  html(){return `<div class="l">${icon('drawdoc',18.5)}</div><span class="t">${txt('Untitled 1 - LibreOffice Draw',193)}</span><div class="r">${icon('shade')}${icon('min',0,'margin-left:11px')}${icon('max',0,'margin-left:11px')}${icon('bx',0,'margin-left:11px')}</div>`}
}
class DrawMenu extends Base{
  css(){return `:host{display:flex;height:24px;align-items:center;padding:0 10px 0 8px}
  nav{display:flex;gap:16px;flex:1}`}
  html(){return `<nav>${[['File',23],['Edit',25],['View',32],['Insert',37],['Format',47],['Page',31],['Shape',40],['Tools',33],['Window',51.5],['Help',31]].map(([t,w])=>txt(t,w)).join('')}</nav>${icon('bxs')}`}
}
/* main toolbar: [kind, centre x in the window] */
class DrawToolbar extends Base{
  css(){return `:host{display:flex;height:39px;align-items:center;position:relative;padding-bottom:1px}
  :host{background:linear-gradient(#dbd9d6,#dbd9d6) 0 0/1336px 1px no-repeat}
  .i{display:flex;justify-content:center;align-items:center;flex:none;height:35px}
  .s{width:1px;height:33px;background:#dad8d5;flex:none}
  .on{background:#d5d0cc;border:1px solid #c6c0bb;border-radius:4px}`}
  html(){
    const L=[['new',59],['>',81.500],['open',103],['>',125.500],['save',148],['>',169.500],['|',180.500],['export',202],['pdf',235],['print',267],['|',287.500],['cut',308],['copy',341],['paste',373],['<',395],['|',405.500],['brush',425],['|',446.500],['undo',465],['>',487.500],['redo',509],['<',532],['|',542.500],['grid',563],['guides',596],['zoom',629],['|',649.500],['image',670],['textbox',703],['omega',734],['<',756.500],['fontwork',780],['|',800.500],['*rotate',819.500],['align',863],['>',885.500],['arrange',907],['>',929.500],['distribute',951],['>',973.500],['|',984.500],['shadow',1005],['crop',1039],['|',1058.500],['points',1078],['pen',1112],['cube3d',1145],['+shapes',1177.500]];
    let end=40,h='';
    for(const [k,c] of L){
      let w,b,x;
      if(k==='|'){w=1;b=m=>`<span class="s" style="margin-left:${m}px"></span>`;x=c-.5}
      else if(k==='>'||k==='<'){w=8;x=c-4;b=m=>`<span class="i" style="width:8px;margin-left:${m}px;color:${k==='>'?'#000':'#b5b4b2'}">${icon('dd',0,'margin-top:3px')}</span>`}
      else if(k[0]==='*'){w=44;x=804;b=m=>`<span class="i on" style="width:44px;margin-left:${m}px;gap:6px;justify-content:flex-start;padding-left:2px">${icon('rotate')}${icon('dd',0,'margin-top:3px')}</span>`}
      else if(k[0]==='+'){w=33;x=1161;b=m=>`<span class="i on" style="width:33px;margin-left:${m}px">${icon('shapes')}</span>`}
      else {w=24;x=c-12;b=m=>`<span class="i" style="width:24px;margin-left:${m}px">${icon(k)}</span>`}
      h+=b(x-end); end=x+w;
    }
    return h;
  }
}
class ToolBox extends Base{
  css(){return `:host{display:flex;flex-direction:column;width:50px;padding-top:3px;flex:none}
  .r{height:35px;display:flex;align-items:center;flex:none;padding-left:5px}
  .r.one{padding-left:12px}.r ui-icon:nth-child(2){margin:3px 0 0 6.500px}
  hr{border:0;width:24px;margin:0 0 0 12px;flex:none;background:linear-gradient(#d8d6d3,#d8d6d3) 0 50%/100% 1px no-repeat}`}
  html(){
    const r=n=>`<div class="r">${icon(n)}${icon('dd')}</div>`, o=n=>`<div class="r one">${icon(n)}</div>`, s=h=>`<hr style="height:${h}px">`;
    return o('pointer')+s(9)+r('linecolor')+r('fillcolor')+s(7)+o('line')+o('rect')+o('ellipse')+s(8)+r('arrow')+r('curve')+r('connector')+s(8)+['diamond','smile','dbl','flow','callout','star','cube'].map(r).join('');
  }
}
const shapes = `<g fill="#729fcf" stroke="#3465a4"><ellipse cx="612" cy="434.700" rx="81.500" ry="78.300"/><ellipse cx="596.600" cy="406.300" rx="59.400" ry="56.400"/><ellipse rx="92.400" ry="29.200" transform="translate(773.200 577.200) rotate(-55.300)"/></g>`;
class PagesPane extends Base{
  css(){return `:host{display:grid;grid-template-columns:176px 6px 11px;grid-template-rows:36px 1fr;width:193px;flex:none}
  header{display:flex;justify-content:space-between;align-items:center;padding:1px 1px 0 1px;font-weight:bold}
  .list{grid-column:1;grid-row:2;background:#fff;border:solid #a9a9a7;border-width:1px 0 0 1px;padding:8px}
  .sel{display:flex;width:158px;height:174px;border:1px solid #55789f;background:linear-gradient(#90aed2,#a7c4ea);padding:3px 0 0 12px;gap:5px;line-height:13px;color:#2e4a68;font-weight:bold}
  .sel svg{background:#fff;outline:1px solid #5c6b7c;box-shadow:0 0 3px #333;margin-top:1px;flex:none}
  .bar{grid-column:2/4;grid-row:1/3;display:flex;align-items:center;position:relative}
  .bar::before{content:"";width:1px;height:100%;background:#a4a4a2;margin-left:5px}
  .grip{position:absolute;left:4px;top:279px;width:7px;height:73px;background:#929595;display:flex;align-items:center;justify-content:center}`}
  html(){return `<header>${txt('Pages',43)}${icon('x',11)}</header><div class="list"><div class="sel">${txt('1',8)}<svg width="127" height="164" viewBox="436 249 425 550" preserveAspectRatio="none">${shapes.replace('<g ','<g stroke-width="3" ')}</svg></div></div>
  <div class="bar"><span class="grip"><svg width="5" height="8"><path d="M5 0v8L0 4z" fill="#fff"/></svg></span></div>`}
}
class DrawCanvas extends Base{
  css(){return `:host{display:flex;width:730px;flex:none;background:#f5f4f2}svg{display:block;flex:none}
  .sb{width:15px;background:#cdcdcd;border-right:1px solid #a9a9a9;padding:149px 3px 0;flex:none}
  .sb i{display:block;height:301px;border-radius:4px;background:#7d8080}`}
  html(){
    let r='';const U=49.88;
    const T=(x,y,n,rot)=>`<text x="${x}" y="${y}" ${rot?`transform="rotate(-90 ${x} ${y})"`:''} text-anchor="middle" class="n">${n}</text>`;
    for(let i=-3;i<=10;i++){const x=456.200+U*i; if(i)r+=T(x-.500,230.300,Math.abs(i))+`<path d="M${x} 220v1M${x} 235v1" stroke="#999"/>`; const h=x+U/2; if(h<985)r+=`<path d="M${Math.round(h)-.500} 224v6" stroke="#a5a5a3"/>`}
    for(let i=0;i<=10;i++){const y=268.500+U*i; if(i&&i!==4)r+=T(293,y,i,1)+`<path d="M283 ${y}h1M297 ${y}h1" stroke="#999"/>`; const h=y+U/2; r+=`<path d="M286 ${Math.round(h)+.500}h6" stroke="#a5a5a3"/>`}
    let hd='';
    for(const y of [468,577,685])for(const x of [715.300,773.300,830.400]){if(x===773.300&&y===577)continue;hd+=`<ellipse cx="${x}" cy="${y+.400}" rx="${x===773.300?5:4}" ry="${y===577?5:4}"/>`}
    return `<style>.n{font:10px "DejaVu Sans",sans-serif;fill:#8b8b89}</style><svg width="715" height="594" viewBox="283 216 715 594">
    <path d="M283 216h715v25H283z" fill="#f6f5f4"/>
    <path d="M456 220.500h385v15.500H456z" fill="#fff"/><path d="M300 220.500h156.500v15H300M998 220.500H841.500v15H998" fill="#f5f4f2" stroke="#ababa9"/>
    <path d="M283 268h16v511h-16z" fill="#fff"/><path d="M283.500 241v27.500h15V241M283.500 815v-36.500h15V815" fill="none" stroke="#ababa9"/>
    ${r}<path d="M286 243.500h6M286 792.500h6" stroke="#a5a5a3"/>
    <path d="M715.500 221v14M717.500 221v14M829.500 221v14M831.500 221v14M283 467.500h15M283 469.500h15M283 684.500h15M283 686.500h15" stroke="#8e8e8c" stroke-width=".9"/>
    <path d="M285 226.500h11M288.500 222v11" stroke="#111"/>
    <rect x="436" y="249" width="425.500" height="550" fill="#fff" stroke="#7c7c7c" stroke-width="2"/>
    <rect x="456.500" y="269.500" width="385" height="509" fill="none" stroke="#cacaca"/>
    ${shapes}<g fill="#ffb3b3" stroke="#c4302f" stroke-width="1.100">${hd}</g>
    <circle cx="746.400" cy="515.500" r="5" fill="#ffb3b3" stroke="#6a4a4a"/><path d="M746.500 508v4M746.500 519v4M739 515.500h4M750 515.500h4" stroke="#333"/></svg>
    <div class="sb"><i></i></div>`}
}
class DeckHead extends Base{
  css(){return `:host{display:flex;height:18px;margin:0 0 1px 2px;background:#e6e5e3;align-items:center;font-weight:bold;flex:none}ui-icon{width:14px;margin-left:2px}`}
  html(){const o=this.hasAttribute('open');return `${icon(o?'bigdd':'tright',0,o?'':'padding-left:4px')}${txt(this.getAttribute('label'),this.getAttribute('w'))}`}
}
class PropRow extends Base{
  css(){return `:host{display:flex;align-items:center;flex:none;position:relative}.l{width:95px;margin-left:8px;flex:none;display:flex}`}
  html(){const l=this.getAttribute('label');return `<span class="l">${l?txt(l,this.getAttribute('w')):''}</span><slot></slot>`}
}
class ComboBox extends Base{
  css(){return `:host{display:flex;align-items:center;height:34px;border:1px solid #c3beb9;border-radius:4px;background:linear-gradient(#f7f6f5,#eeedeb);padding:0 11px;box-shadow:0 1px 1px #0001;flex:none;width:239px}ui-icon{margin-left:auto}`}
  html(){return `${this.getAttribute('label')?txt(this.getAttribute('label'),this.getAttribute('w')):''}${icon('bigdd')}`}
}
const PAL=`000000 111111 1c1c1c 333333 666666 808080 999999 b2b2b2 cccccc dddddd eeeeee ffffff
ffff00 ffbf00 ff8000 ff4000 ff0000 bf0041 800080 55308d 2a6099 158466 00a933 81d41a
ffffd7 fff5ce ffdbb6 ffd8ce ffd7d7 f7d1d5 e0c2cd dedce6 dee6ef dee7e5 dde8cb f6f9d4
ffffa6 ffe994 ffb66c ffaa95 ffa6a6 ec9ba4 bf819e b7b3ca b4c7dc b3cac7 afd095 e8f2a1
ffff6d ffde59 ff972f ff7b59 ff6d6d e16173 a1467e 8e86ae 729fcf 81aca6 77bc65 d4ea6b
ffff38 ffd428 ff860d ff5429 ff3838 d62e4e 8d1d75 6b5e9b 5983b0 50938a 3faf46 bbe33d
e6e905 e8a202 ea7500 ed4c05 f10d0c a7074b 780373 5b277d 3465a4 168253 069a2e 5eb91e
acb20c b47804 b85c00 be480a c9211e 861141 650953 55215b 355269 1e6a39 127622 468a1a
706e0c 784b04 7b3d00 813709 8d281e 611729 4e102d 481d32 383d3c 28471f 224b12 395511
443205 472702 492300 4b2204 50200c 41190d 3b160e 3a1a0f 362413 302709 2d2a08 342a06`.split(/\s+/);
class ColorPopup extends Base{
  css(){return `:host{position:absolute;left:107px;top:169px;width:202px;height:267px;background:#f6f5f4;display:block;padding:0 4px}
  combo-box{width:194px}
  .g{display:grid;grid-template-columns:repeat(12,12px);grid-auto-rows:12px;gap:4px;padding:2px 2px;border:1px solid #c9c4bf;width:194px;height:162px;background:#faf8f6;position:relative}
  .hov{box-shadow:inset 0 0 0 1px #8a6f8a,0 0 0 1px #fff,0 0 0 2px #a9c1e4}
  .cur{box-shadow:0 0 0 1px #fff,0 0 0 2px #1e63b3;outline:1px dashed #000}
  .tip{position:absolute;left:15px;top:122px;width:107px;height:42px;border-radius:4px;background:#000000cf;color:#fff;display:flex;align-items:center;justify-content:center}
  .rec{height:34px;border-bottom:1px solid #dcdad7;display:flex;padding-top:2px}
  .cus{height:32px;display:flex;align-items:center;gap:9px;padding-left:9px}`}
  html(){return `<combo-box label="standard" w="57"></combo-box><div class="g">${PAL.map((c,i)=>`<i style="background:#${c}"${i===51?' class="hov"':i===56?' class="cur"':''}></i>`).join('')}</div>
  <div class="rec">${txt('Recent',44)}</div><div class="cus">${icon('wheel')}${txt('Custom Color...',101)}</div><div class="tip">${txt('Light Brick 2',81)}</div>`}
}
class SideBar extends Base{
  css(){return `:host{display:flex;flex:1;min-width:0}
  .grip{width:7px;height:73px;margin:279px 0 0 -1px;background:#929595;display:flex;align-items:center;justify-content:center;flex:none;position:relative}
  .deck{width:331px;flex:none;overflow:hidden;display:flex;flex-direction:column;position:relative}
  .h{display:flex;height:25px;align-items:center;font-weight:bold;padding:1px 5px 0 3px;flex:none;margin-bottom:1px}
  .h ui-icon{margin-left:auto}.h .g{height:14px;width:2px;margin-right:7px;background:repeating-linear-gradient(#333 0 2px,transparent 2px 4px)}
  .sw{width:60px;height:12px;background:#729fcf;border:1px solid #7f8488;margin-left:4px}
  .b{width:18px;height:34px;border-radius:4px;background:#d5d0cc;display:flex;align-items:center;justify-content:center;margin-left:8px}
  .spin{height:34px;width:240px;border:1px solid #c9c4bf;border-radius:4px;background:#fff;display:flex;flex:none;padding-left:167px}
  .spin i{width:35px;border-left:1px solid #e3e1de;flex:none;display:flex;align-items:center;justify-content:center}
  .knob{width:20px;height:20px;border-radius:50%;border:1px solid #b8b3ae;background:linear-gradient(#fff,#f2f1f0);margin-left:-92px;flex:none}
  .track{height:3px;width:76px;background:#dedbd8;border:1px solid #c6c2bd;border-width:1px 0;margin-right:220px;flex:none}
  .tabs{flex:1;display:flex;flex-direction:column;align-items:center;padding:8px 6px 0 0}
  .tabs span{display:flex;align-items:center;justify-content:center;width:36px;height:34px;margin-bottom:8px}
  .on{background:#d5d0cc;border:1px solid #c6c0bb;border-radius:4px;}
  prop-row{height:34px}`}
  html(){
    const cut=(inner)=>`<span style="width:8px;margin-left:204px;flex:none;display:flex">${inner}</span>${icon('bigdd',0,'margin-left:8px;flex:none')}`;
    return `<span class="grip"><svg width="5" height="8"><path d="M0 0v8l5-4z" fill="#fff"/></svg></span>
  <div class="deck"><div class="h"><span class="g"></span>${txt('Properties',80)}${icon('bxs')}</div>
  <deck-head label="Character" w="73"></deck-head><deck-head label="Paragraph" w="80"></deck-head><deck-head open label="Area" w="34"></deck-head>
  <prop-row label="Fill:" w="23" style="margin-top:5px"><combo-box label="Color" w="34"></combo-box></prop-row>
  <prop-row style="margin-top:7px">${icon('minifill',0,'margin-left:9px')}<span class="sw" style="margin-left:3px"></span><span class="b">${icon('bigdd')}</span></prop-row>
  <prop-row label="Transparency:" w="89" style="margin-top:7px"><combo-box></combo-box></prop-row>
  <prop-row style="margin-top:3px"><span class="knob"></span><span class="track"></span><span class="spin" style="margin-left:-18px;width:60px;padding:0 0 0 6px;border-radius:0">${icon('plus',15,'margin:auto 0')}</span></prop-row>
  <deck-head open label="Line" w="32" style="margin-top:7px"></deck-head>
  <prop-row label="Line:" w="30" style="margin-top:9px">${cut('<svg width="8" height="14"><path d="M0 0h8v14H0z" fill="#fff"/><path d="M2 6.500h4" stroke="#222"/></svg>')}</prop-row>
  <prop-row label="Width:" w="41" style="margin-top:11px">${cut('<svg width="8" height="14"><path d="M2 6.500h4" stroke="#222"/></svg>')}</prop-row>
  <prop-row label="Color:" w="37" style="margin-top:11px">${cut('<svg width="6" height="12"><path d="M0 0h4v12H0z" fill="#3465a4"/></svg>')}</prop-row>
  <prop-row label="Transparency:" w="89" style="margin-top:7px"><span class="spin"><i></i><i>${icon('plus',15)}</i></span></prop-row>
  <prop-row label="Corner style:" w="82" style="margin-top:3px"><combo-box label="Rounded" w="55"></combo-box></prop-row>
  <prop-row label="Cap style:" w="64" style="margin-top:3px"><combo-box label="Flat" w="25"></combo-box></prop-row>
  <deck-head label="Effect" w="42" style="margin-top:7px"></deck-head><deck-head label="Shadow" w="58"></deck-head><deck-head open label="Position and Size" w="130"></deck-head>
  <prop-row style="margin-top:5px"><span class="spin"><i></i><i></i></span></prop-row>
  <color-popup></color-popup></div>
  <div class="tabs"><span style="height:24px;margin-bottom:15px">${icon('burger')}</span><span class="on">${icon('props')}</span><span>${icon('styles')}</span><span>${icon('gallery')}</span><span>${icon('nav')}</span><span>${icon('shapetab')}</span></div>`}
}
class UiIcon extends Base{
  css(){return ':host{display:inline-flex;flex:none}svg{display:block;overflow:visible}'}
  html(){const [w,h,s]=ICONS[this.getAttribute('name')];const k=(+this.getAttribute('size')||w)/w;return `<svg width="${w*k}" height="${h*k}" viewBox="0 0 ${w} ${h}">${s}</svg>`}
}
/* one line of text, spaced to an exact advance width */
class FitText extends Base{
  css(){return ':host{display:inline-block;white-space:nowrap;flex:none}span{display:inline-block}'}
  html(){return '<span><slot></slot></span>'}
  ready(){const w=+this.getAttribute('w'),s=this.shadowRoot.querySelector('span'),n=this.textContent.length;
    const d=w-s.getBoundingClientRect().width; s.style.letterSpacing=(d/n)+'px'; this.style.width=w+'px';}
}
[['host-desktop',HostDesktop],['host-panel',HostPanel],['qemu-header',QemuHeader],['guest-screen',GuestScreen],['guest-panel',GuestPanel],['draw-title',DrawTitle],['draw-menu',DrawMenu],['draw-toolbar',DrawToolbar],['tool-box',ToolBox],['pages-pane',PagesPane],['draw-canvas',DrawCanvas],['side-bar',SideBar],['deck-head',DeckHead],['prop-row',PropRow],['color-popup',ColorPopup],['combo-box',ComboBox],['ui-icon',UiIcon],['fit-text',FitText]].forEach(([n,c])=>customElements.define(n,c));
</script>
</body>
</html>
